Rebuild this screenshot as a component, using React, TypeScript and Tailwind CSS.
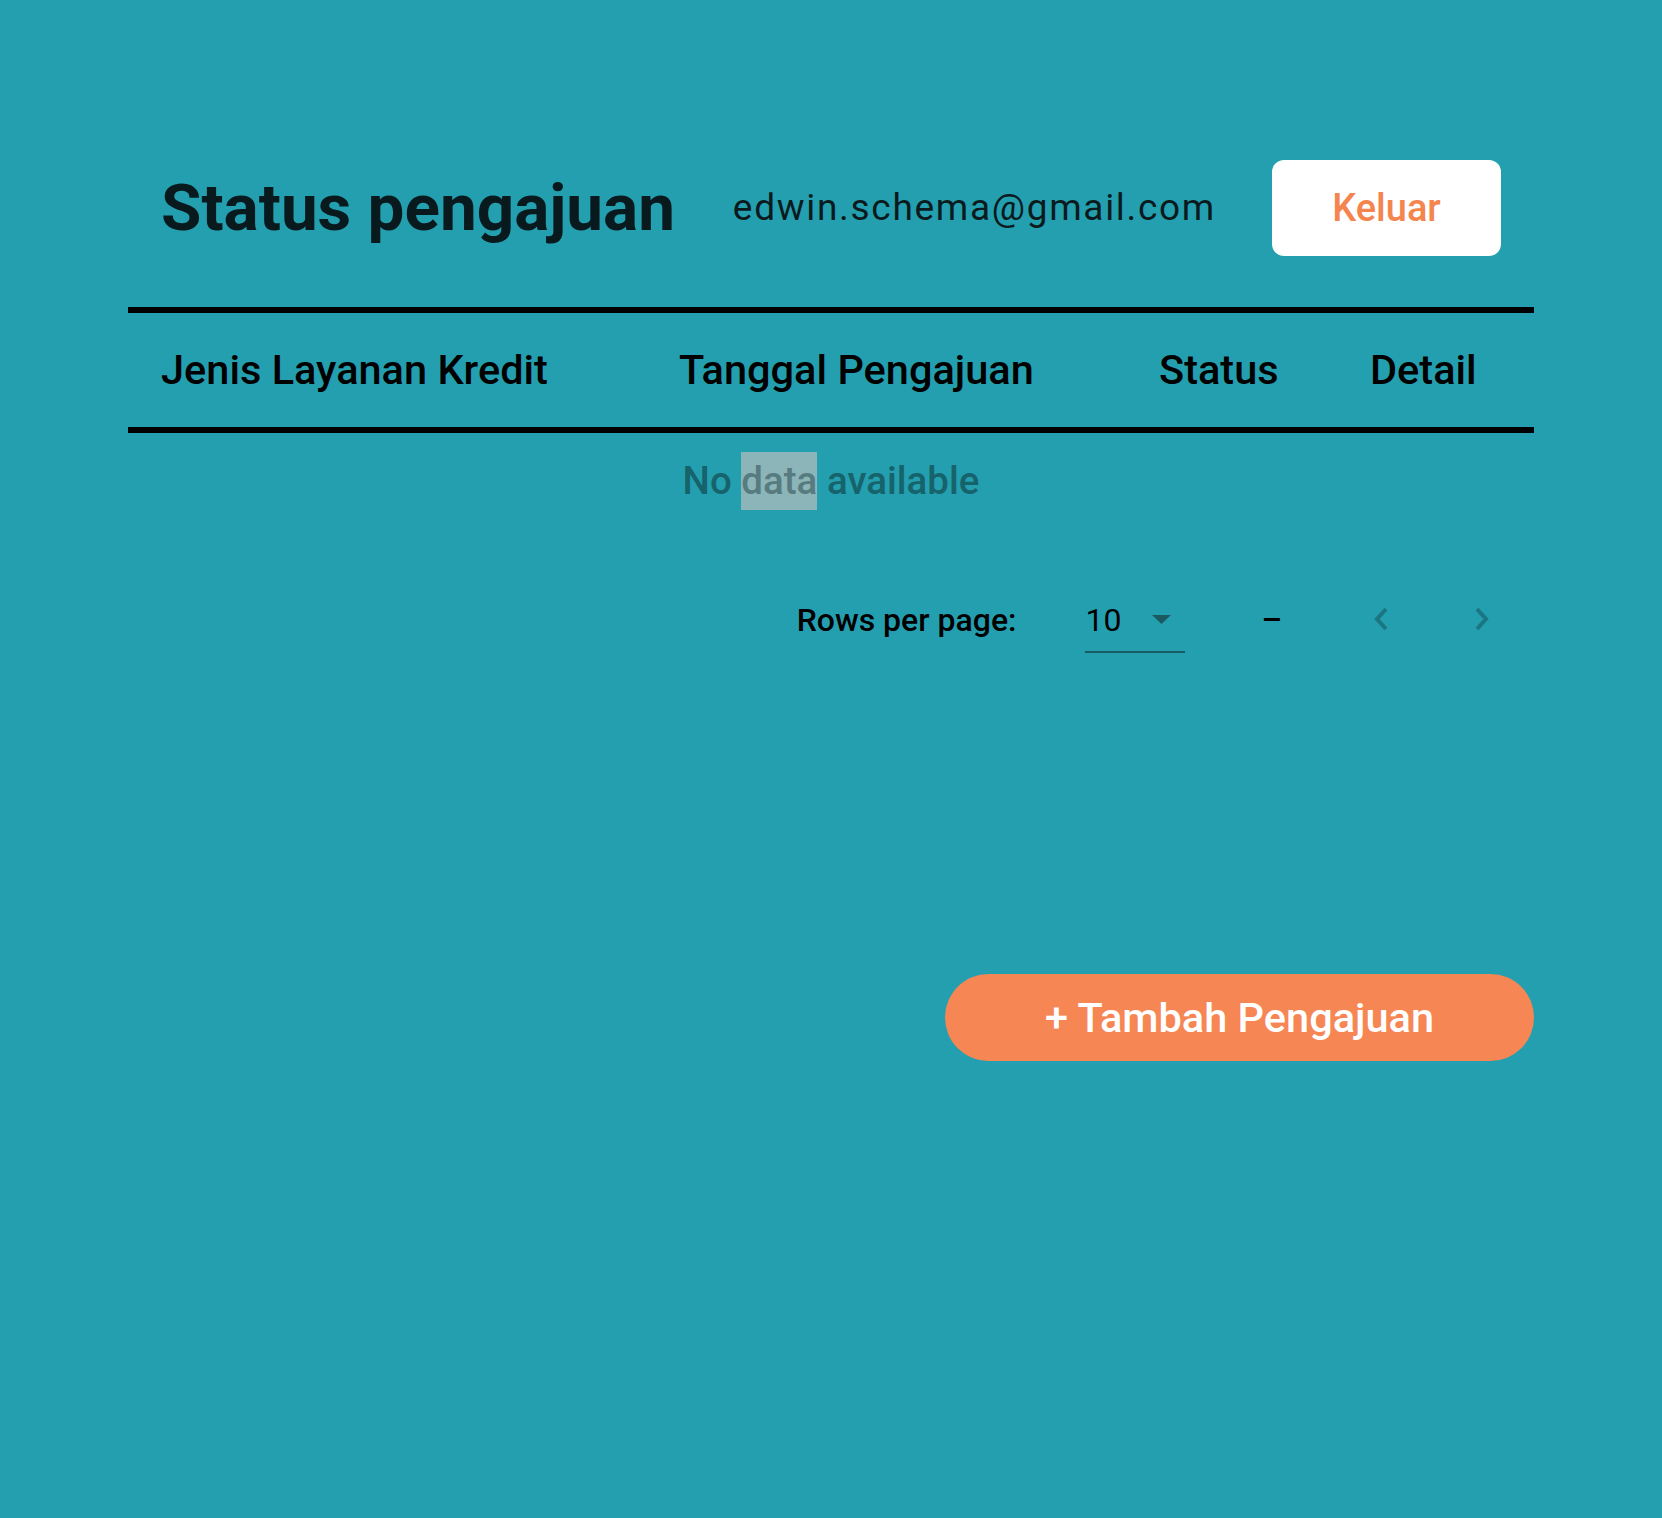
import { useState } from 'react';

const columns = [
  'Jenis Layanan Kredit',
  'Tanggal Pengajuan',
  'Status',
  'Detail',
];

const Chevron = ({ dir }: { dir: 'left' | 'right' }) => (
  <svg width="16" height="24" viewBox="0 0 16 24" fill="none">
    <path
      d={dir === 'left' ? 'M13 2 L4 12 L13 22' : 'M3 2 L12 12 L3 22'}
      stroke="#1b7682"
      strokeWidth="4"
    />
  </svg>
);

export default function App() {
  const [rows] = useState(10);

  return (
    <div className="min-h-[1518px] w-full bg-[#249faf] font-['Roboto',sans-serif]">
      <div className="mx-auto w-[1406px] pt-[160px]">
        {/* Header */}
        <div className="flex h-[96px] items-center px-[33px]">
          <h1 className="text-[65.6px] font-bold leading-[76px] text-[#081a1d]">
            Status pengajuan
          </h1>
          <span className="ml-auto text-[37px] leading-[40px] tracking-[1.7px] text-[#0a1a1d]">
            edwin.schema@gmail.com
          </span>
          <button className="ml-[56px] flex h-[96px] w-[229px] items-center justify-center rounded-[12px] bg-white text-[38px] font-medium leading-[44px] text-[#f5854f]">
            Keluar
          </button>
        </div>

        {/* Table head */}
        <div className="mt-[51px] grid h-[126px] grid-cols-[518px_480px_211px_1fr] items-center border-y-[6px] border-black px-[33px]">
          {columns.map((col) => (
            <div key={col} className="text-[41.5px] font-medium leading-[50px] text-black">
              {col}
            </div>
          ))}
        </div>

        {/* Empty state */}
        <div className="pt-[19px] text-center text-[38.5px] font-medium leading-[58px] text-[#16636c]">
          No{' '}
          <span className="inline-block h-[58px] bg-[#8cb5b9] align-top text-[#577b7f]">data</span>{' '}
          available
        </div>

        {/* Pagination */}
        <div className="mt-[90px] flex h-[53px] items-start justify-end pr-[44px]">
          <span className="text-[32px] font-medium leading-[40px] text-black">Rows per page:</span>
          <div className="ml-[69px] flex h-[53px] w-[100px] items-start border-b-2 border-[#155c65]">
            <span className="text-[32px] leading-[40px] text-black">{rows}</span>
            <svg className="ml-[31px] mt-[15px]" width="19" height="9" viewBox="0 0 19 9">
              <path d="M0 0 H19 L9.5 9 Z" fill="#1b5a60" />
            </svg>
          </div>
          <span className="ml-[76px] text-[32px] font-medium leading-[40px] text-black">–</span>
          <div className="ml-[91px] mt-[7px]">
            <Chevron dir="left" />
          </div>
          <div className="ml-[85px] mt-[7px]">
            <Chevron dir="right" />
          </div>
        </div>

        {/* Add button */}
        <div className="mt-[321px] flex justify-end">
          <button className="flex h-[87px] w-[589px] items-center justify-center rounded-full bg-[#f68654] text-[41.5px] font-medium leading-[50px] text-white">
            + Tambah Pengajuan
          </button>
        </div>
      </div>
    </div>
  );
}
